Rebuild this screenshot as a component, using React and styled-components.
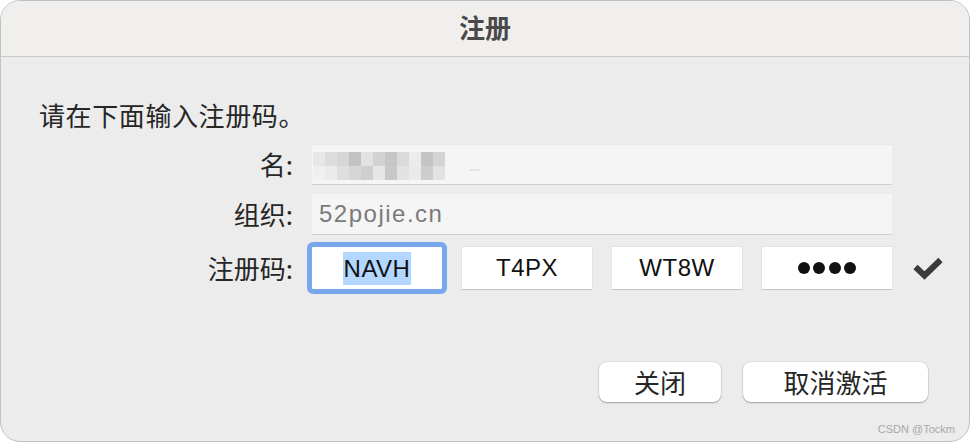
import React from "react";
import styled, { createGlobalStyle } from "styled-components";

const Global = createGlobalStyle`
  html, body { margin: 0; padding: 0; background: #ffffff; }
  * { box-sizing: border-box; }
`;

const CJK = `"Noto Sans CJK SC", "Liberation Sans", sans-serif`;
const LATIN = `"Liberation Sans", "Noto Sans CJK SC", sans-serif`;

const Window = styled.div`
  width: 970px;
  height: 442px;
  border-radius: 20px;
  border: 1px solid #c2c2c2;
  background: #ececec;
  overflow: hidden;
  display: flex;
  flex-direction: column;
  position: relative;
`;

const TitleBar = styled.div`
  height: 56px;
  flex: none;
  background: #f0efee;
  border-bottom: 1px solid #c9c9c9;
  display: flex;
  align-items: center;
  justify-content: center;
  font-family: ${CJK};
  font-size: 26px;
  font-weight: 700;
  color: #4a4a4a;
  padding-bottom: 4px;
`;

const Body = styled.div`
  flex: 1;
  display: flex;
  flex-direction: column;
  padding-top: 40px;
`;

const Intro = styled.div`
  font-family: ${CJK};
  font-size: 26px;
  line-height: 36px;
  color: #262626;
  padding-left: 38px;
  letter-spacing: 0.6px;
`;

const Form = styled.div`
  display: grid;
  grid-template-columns: 292px 580px 40px;
  column-gap: 19px;
  align-items: center;
  margin-top: 11px;
`;

const Label = styled.div`
  grid-column: 1;
  text-align: right;
  font-family: ${CJK};
  font-size: 26px;
  line-height: 36px;
  color: #262626;
  margin-top: ${(p) => p.$mt || 0}px;
`;

const Field = styled.div`
  grid-column: 2;
  height: ${(p) => p.$h}px;
  margin-top: ${(p) => p.$mt || 0}px;
  background: #f5f5f5;
  box-shadow: 0 1px 0 #d0d0d0, inset 0 1px 0 #e9e9e9;
  display: flex;
  align-items: center;
  padding-left: 7px;
  font-family: ${LATIN};
  font-size: 24px;
  letter-spacing: 1.5px;
  color: #7a7a7a;
`;

const Mosaic = styled.div`
  display: grid;
  grid-template-columns: repeat(11, 12px);
  grid-auto-rows: 14px;
  margin-left: -6px;
  margin-top: 4px;
`;

const Cell = styled.div`
  background: ${(p) => p.$c};
`;

const Dash = styled.div`
  width: 10px;
  height: 2px;
  background: #e4e4e4;
  margin-left: 25px;
  margin-top: 12px;
`;

const CodeRow = styled.div`
  grid-column: 2;
  display: flex;
  gap: 20px;
  margin-top: 13px;
`;

const CodeBox = styled.div`
  width: 130px;
  height: 42px;
  background: #ffffff;
  box-shadow: 0 1px 0 #c6c6c6, 0 0 0 1px #e3e3e3;
  display: flex;
  align-items: center;
  justify-content: center;
  font-family: ${LATIN};
  font-size: 24px;
  letter-spacing: 0.5px;
  color: #111;
  outline: ${(p) => (p.$focused ? "5px solid #78a7ef" : "none")};
  outline-offset: 0px;
  border-radius: ${(p) => (p.$focused ? "1px" : "0")};
`;

const Selected = styled.span`
  background: #b3d7ff;
  padding: 0 1px 0 1px;
  line-height: 33px;
`;

const Dots = styled.div`
  display: flex;
  gap: 3.5px;
`;

const Dot = styled.span`
  width: 12px;
  height: 12px;
  border-radius: 50%;
  background: #111;
`;

const CheckCell = styled.div`
  grid-column: 3;
  margin-top: 13px;
  display: flex;
  align-items: center;
  padding-left: 2px;
`;

const Buttons = styled.div`
  display: flex;
  justify-content: flex-end;
  gap: 22px;
  padding-right: 41px;
  margin-top: 73px;
`;

const Button = styled.button`
  width: ${(p) => p.$w}px;
  height: 40px;
  border: none;
  border-radius: 8px;
  background: #ffffff;
  box-shadow: 0 1px 1.5px rgba(0, 0, 0, 0.28), 0 0 0 0.5px rgba(0, 0, 0, 0.12);
  font-family: ${CJK};
  font-size: 26px;
  line-height: 40px;
  color: #262626;
  padding: 0;
  display: flex;
  align-items: center;
  justify-content: center;
`;

const Watermark = styled.div`
  position: absolute;
  right: 14px;
  bottom: 6px;
  font-family: ${LATIN};
  font-size: 11px;
  color: #a8a8a8;
`;

const row1 = ["#e8e8e8", "#dcdcdc", "#d6d6d6", "#c2c2c2", "#e2e2e2", "#d2d2d2", "#c6c6c6", "#dadada", "#ececec", "#c4c4c4", "#d4d4d4"];
const row2 = ["#f0f0f0", "#ebebeb", "#dedede", "#d6d6d6", "#cfcfcf", "#e6e6e6", "#c8c8c8", "#e2e2e2", "#eaeaea", "#cdcdcd", "#e2e2e2"];

function Check() {
  return (
    <svg width="30" height="24" viewBox="0 0 30 24">
      <polyline
        points="2.5,11 11.5,19.5 27.5,4"
        fill="none"
        stroke="#3a3a3a"
        strokeWidth="6"
        strokeLinejoin="miter"
        strokeLinecap="butt"
      />
    </svg>
  );
}

export default function App() {
  return (
    <>
      <Global />
      <Window>
        <TitleBar>注册</TitleBar>
        <Body>
          <Intro>请在下面输入注册码。</Intro>
          <Form>
            <Label $mt={0}>名:</Label>
            <Field $h={40}>
              <Mosaic>
                {[...row1, ...row2].map((c, i) => (
                  <Cell key={i} $c={c} />
                ))}
              </Mosaic>
              <Dash />
            </Field>
            <Label $mt={9}>组织:</Label>
            <Field $h={41} $mt={9}>52pojie.cn</Field>
            <Label $mt={13}>注册码:</Label>
            <CodeRow>
              <CodeBox $focused>
                <Selected>NAVH</Selected>
              </CodeBox>
              <CodeBox>T4PX</CodeBox>
              <CodeBox>WT8W</CodeBox>
              <CodeBox>
                <Dots>
                  <Dot />
                  <Dot />
                  <Dot />
                  <Dot />
                </Dots>
              </CodeBox>
            </CodeRow>
            <CheckCell>
              <Check />
            </CheckCell>
          </Form>
          <Buttons>
            <Button $w={122}>关闭</Button>
            <Button $w={185}>取消激活</Button>
          </Buttons>
        </Body>
        <Watermark>CSDN @Tockm</Watermark>
      </Window>
    </>
  );
}
